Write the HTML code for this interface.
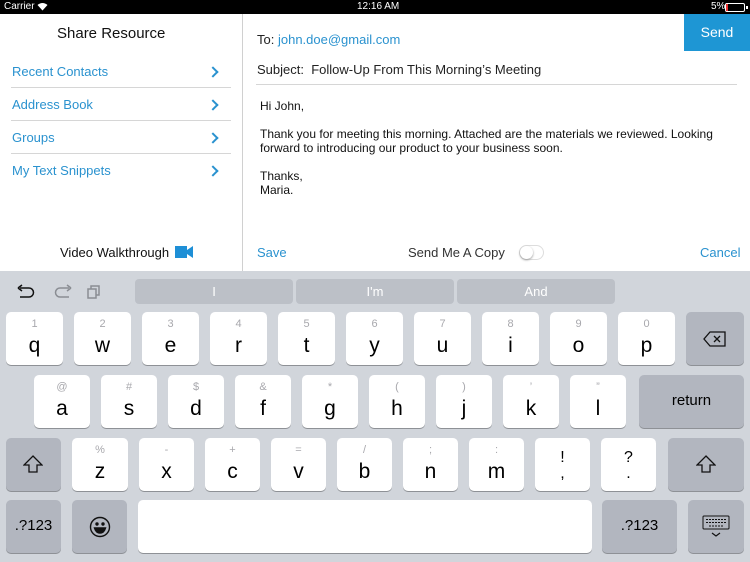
<!DOCTYPE html>
<html><head><meta charset="utf-8"><style>
*{margin:0;padding:0;box-sizing:border-box}
body{width:750px;height:562px;overflow:hidden;position:relative;background:#fff;font-family:"Liberation Sans",sans-serif}
.a{position:absolute;white-space:nowrap}
.blue{color:#2a92cf}
.sep{position:absolute;height:1px;background:#d6d6d6}
.chev{position:absolute;width:8px;height:8px;border-right:2px solid #2a92cf;border-top:2px solid #2a92cf;transform:rotate(45deg)}
.k{position:absolute;height:53px;background:#fff;border-radius:5px;box-shadow:0 1px 0 #8e9196;text-align:center;color:#000}
.k.d{background:#b2b6bf}
.k .s{position:absolute;left:0;right:0;top:6px;font-size:11px;color:#a8a8ad}
.k .l{position:absolute;left:0;right:0;top:22px;font-size:21px;line-height:24px}
.k .m{position:absolute;left:0;right:0;top:17px;font-size:16px}
.sug{position:absolute;top:279px;height:25px;background:#bcc0c7;border-radius:4px;color:#fff;font-size:13px;text-align:center;line-height:25px}
</style></head><body>
<div class="a" style="left:0;top:0;width:750px;height:14px;background:#000"></div>
<div class="a" style="left:4px;top:1px;font-size:10px;color:#fff">Carrier</div>
<svg class="a" style="left:37px;top:2px" width="11" height="9" viewBox="0 0 11 9"><path d="M0.5 3 Q5.5 -1 10.5 3 L5.5 8.5Z" fill="#fff"/></svg>
<div class="a" style="left:357px;top:1px;font-size:10px;color:#fff">12:16 AM</div>
<div class="a" style="left:711px;top:1px;font-size:10px;color:#fff">5%</div>
<div class="a" style="left:725px;top:3px;width:20px;height:9px;border:1px solid #fff;border-radius:2px"><div style="width:2px;height:7px;background:#e33"></div></div>
<div class="a" style="left:746px;top:6px;width:2px;height:3px;background:#fff"></div>

<!-- left pane -->
<div class="a" style="left:242px;top:14px;width:1px;height:257px;background:#d0d0d0"></div>
<div class="a" style="left:57px;top:25px;font-size:15px;color:#111">Share Resource</div>
<div class="a blue" style="left:12px;top:64px;font-size:13px">Recent Contacts</div>
<div class="a blue" style="left:12px;top:97px;font-size:13px">Address Book</div>
<div class="a blue" style="left:12px;top:130px;font-size:13px">Groups</div>
<div class="a blue" style="left:12px;top:163px;font-size:13px">My Text Snippets</div>
<div class="chev" style="left:209px;top:68px"></div>
<div class="chev" style="left:209px;top:101px"></div>
<div class="chev" style="left:209px;top:134px"></div>
<div class="chev" style="left:209px;top:167px"></div>
<div class="sep" style="left:11px;top:87px;width:220px"></div>
<div class="sep" style="left:11px;top:120px;width:220px"></div>
<div class="sep" style="left:11px;top:153px;width:220px"></div>
<div class="a" style="left:60px;top:245px;font-size:13px;color:#111">Video Walkthrough</div>
<svg class="a" style="left:175px;top:246px" width="18" height="12" viewBox="0 0 18 12"><rect x="0" y="0" width="12" height="12" fill="#1e8fd6"/><path d="M12 4 L18 0 V12 L12 8Z" fill="#1e8fd6"/></svg>

<!-- right pane -->
<div class="a" style="left:684px;top:14px;width:66px;height:37px;background:#1e96d4;color:#fff;font-size:14px;text-align:center;line-height:37px">Send</div>
<div class="a" style="left:257px;top:32px;font-size:13px;color:#222">To: <span class="blue">john.doe@gmail.com</span></div>
<div class="a" style="left:257px;top:62px;font-size:13px;color:#222">Subject:&nbsp; Follow-Up From This Morning’s Meeting</div>
<div class="sep" style="left:256px;top:84px;width:481px"></div>
<div class="a" style="left:260px;top:99px;font-size:12px;color:#111;line-height:14px">Hi John,<br><br>Thank you for meeting this morning. Attached are the materials we reviewed. Looking<br>forward to introducing our product to your business soon.<br><br>Thanks,<br>Maria.</div>
<div class="a blue" style="left:257px;top:245px;font-size:13px">Save</div>
<div class="a" style="left:408px;top:245px;font-size:13px;color:#333">Send Me A Copy</div>
<div class="a" style="left:519px;top:245px;width:25px;height:15px;border:1px solid #ddd;border-radius:8px"><div style="width:13px;height:13px;border-radius:50%;background:#fff;box-shadow:0 1px 2px #999"></div></div>
<div class="a blue" style="left:700px;top:245px;font-size:13px">Cancel</div>

<!-- keyboard -->
<div class="a" style="left:0;top:271px;width:750px;height:291px;background:#d1d5db"></div>
<svg class="a" style="left:17px;top:284px" width="90" height="15" viewBox="0 0 90 15" fill="none" stroke-width="1.5">
<path d="M3 4 H12 A4.5 4.5 0 0 1 12 13 H3" stroke="#111"/><path d="M1 4 L5 1 M1 4 L5 7" stroke="#111"/>
<path d="M52 4 H43 A4.5 4.5 0 0 0 43 13 H52" stroke="#8a8d93"/><path d="M54 4 L50 1 M54 4 L50 7" stroke="#8a8d93"/>
<rect x="71" y="5" width="8" height="9" stroke="#8a8d93"/><path d="M74 5 V2 H82 V11 H79" stroke="#8a8d93"/>
</svg>
<div class="sug" style="left:135px;width:158px">I</div>
<div class="sug" style="left:296px;width:158px">I'm</div>
<div class="sug" style="left:457px;width:158px">And</div>

<!-- row1 -->
<div class="k" style="left:6px;top:312px;width:57px"><div class="s">1</div><div class="l">q</div></div>
<div class="k" style="left:74px;top:312px;width:57px"><div class="s">2</div><div class="l">w</div></div>
<div class="k" style="left:142px;top:312px;width:57px"><div class="s">3</div><div class="l">e</div></div>
<div class="k" style="left:210px;top:312px;width:57px"><div class="s">4</div><div class="l">r</div></div>
<div class="k" style="left:278px;top:312px;width:57px"><div class="s">5</div><div class="l">t</div></div>
<div class="k" style="left:346px;top:312px;width:57px"><div class="s">6</div><div class="l">y</div></div>
<div class="k" style="left:414px;top:312px;width:57px"><div class="s">7</div><div class="l">u</div></div>
<div class="k" style="left:482px;top:312px;width:57px"><div class="s">8</div><div class="l">i</div></div>
<div class="k" style="left:550px;top:312px;width:57px"><div class="s">9</div><div class="l">o</div></div>
<div class="k" style="left:618px;top:312px;width:57px"><div class="s">0</div><div class="l">p</div></div>
<div class="k d" style="left:686px;top:312px;width:58px"><svg style="position:absolute;left:17px;top:19px" width="24" height="16" viewBox="0 0 24 16" fill="none" stroke="#111" stroke-width="1.3"><path d="M7 1 H22 V15 H7 L1 8Z"/><path d="M11 5 L17 11 M17 5 L11 11"/></svg></div>
<!-- row2 -->
<div class="k" style="left:34px;top:375px;width:56px"><div class="s">@</div><div class="l">a</div></div>
<div class="k" style="left:101px;top:375px;width:56px"><div class="s">#</div><div class="l">s</div></div>
<div class="k" style="left:168px;top:375px;width:56px"><div class="s">$</div><div class="l">d</div></div>
<div class="k" style="left:235px;top:375px;width:56px"><div class="s">&amp;</div><div class="l">f</div></div>
<div class="k" style="left:302px;top:375px;width:56px"><div class="s">*</div><div class="l">g</div></div>
<div class="k" style="left:369px;top:375px;width:56px"><div class="s">(</div><div class="l">h</div></div>
<div class="k" style="left:436px;top:375px;width:56px"><div class="s">)</div><div class="l">j</div></div>
<div class="k" style="left:503px;top:375px;width:56px"><div class="s">’</div><div class="l">k</div></div>
<div class="k" style="left:570px;top:375px;width:56px"><div class="s">”</div><div class="l">l</div></div>
<div class="k d" style="left:639px;top:375px;width:105px"><div class="m" style="font-size:15px">return</div></div>
<!-- row3 -->
<div class="k d" style="left:6px;top:438px;width:55px"><svg style="position:absolute;left:17px;top:17px" width="20" height="18" viewBox="0 0 20 18" fill="none" stroke="#111" stroke-width="1.3"><path d="M10 1 L19 10 H14 V17 H6 V10 H1Z"/></svg></div>
<div class="k" style="left:72px;top:438px;width:56px"><div class="s">%</div><div class="l">z</div></div>
<div class="k" style="left:139px;top:438px;width:55px"><div class="s">-</div><div class="l">x</div></div>
<div class="k" style="left:205px;top:438px;width:55px"><div class="s">+</div><div class="l">c</div></div>
<div class="k" style="left:271px;top:438px;width:55px"><div class="s">=</div><div class="l">v</div></div>
<div class="k" style="left:337px;top:438px;width:55px"><div class="s">/</div><div class="l">b</div></div>
<div class="k" style="left:403px;top:438px;width:55px"><div class="s">;</div><div class="l">n</div></div>
<div class="k" style="left:469px;top:438px;width:55px"><div class="s">:</div><div class="l">m</div></div>
<div class="k" style="left:535px;top:438px;width:55px"><div class="m" style="top:12px;line-height:16px">!<br>,</div></div>
<div class="k" style="left:601px;top:438px;width:55px"><div class="m" style="top:12px;line-height:16px">?<br>.</div></div>
<div class="k d" style="left:668px;top:438px;width:76px"><svg style="position:absolute;left:28px;top:17px" width="20" height="18" viewBox="0 0 20 18" fill="none" stroke="#111" stroke-width="1.3"><path d="M10 1 L19 10 H14 V17 H6 V10 H1Z"/></svg></div>
<!-- row4 -->
<div class="k d" style="left:6px;top:500px;width:55px"><div class="m" style="font-size:15px">.?123</div></div>
<div class="k d" style="left:72px;top:500px;width:55px"><svg style="position:absolute;left:17px;top:16px" width="22" height="22" viewBox="0 0 22 22" fill="none" stroke="#111" stroke-width="1.4"><circle cx="11" cy="11" r="9.5"/><circle cx="8" cy="8" r="1" fill="#111"/><circle cx="14" cy="8" r="1" fill="#111"/><path d="M5.5 12 H16.5 Q15 17 11 17 Q7 17 5.5 12Z" fill="#111"/></svg></div>
<div class="k" style="left:138px;top:500px;width:454px"></div>
<div class="k d" style="left:602px;top:500px;width:75px"><div class="m" style="font-size:15px">.?123</div></div>
<div class="k d" style="left:688px;top:500px;width:56px"><svg style="position:absolute;left:14px;top:15px" width="28" height="24" viewBox="0 0 28 24" fill="none" stroke="#111" stroke-width="1"><rect x="1" y="1" width="26" height="13" rx="1"/><path d="M4 4.5 H24 M4 7.5 H24 M7 11 H21" stroke-dasharray="2 1"/><path d="M10 18 L14 21 L18 18" stroke-width="1.2"/></svg></div>
</body></html>
